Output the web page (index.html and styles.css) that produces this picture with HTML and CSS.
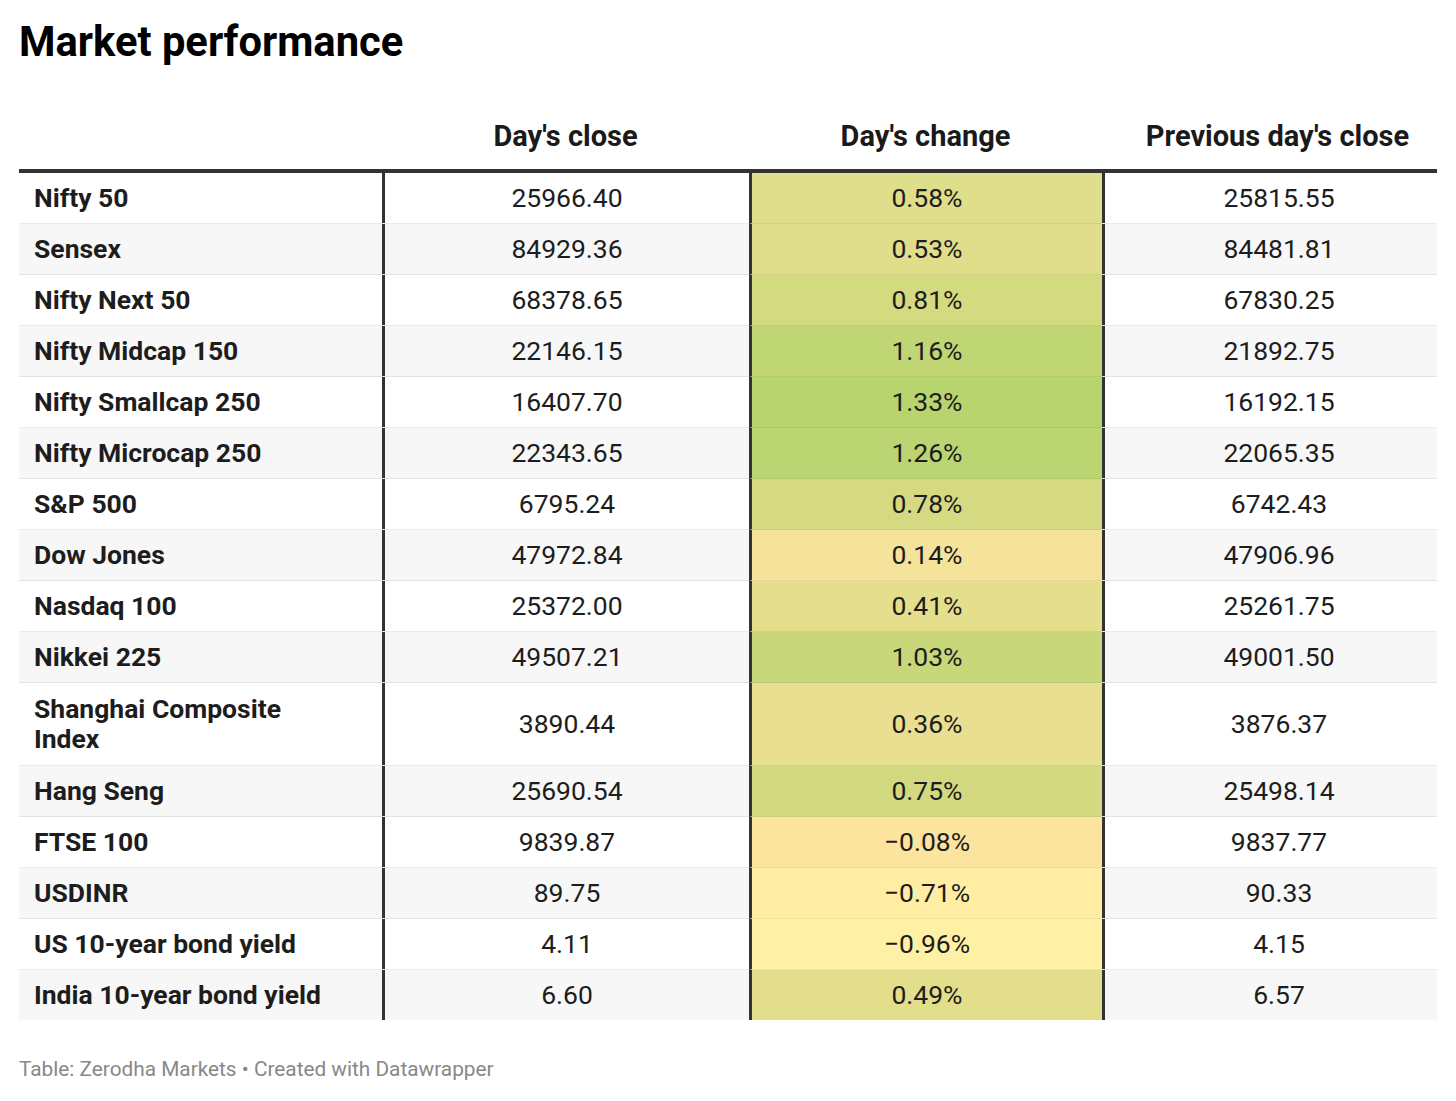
FILE: index.html
```html
<!DOCTYPE html>
<html>
<head>
<meta charset="utf-8">
<link rel="stylesheet" href="styles.css">
</head>
<body>
<div class="chart">
  <h1 class="title">Market performance</h1>
  <div class="table">
    <div class="row head">
      <div class="cell label"></div>
      <div class="cell num">Day's close</div>
      <div class="cell num">Day's change</div>
      <div class="cell num last">Previous day's close</div>
    </div>
    <div class="row"><div class="cell label">Nifty 50</div><div class="cell num">25966.40</div><div class="cell num chg c058">0.58%</div><div class="cell num last">25815.55</div></div>
    <div class="row alt"><div class="cell label">Sensex</div><div class="cell num">84929.36</div><div class="cell num chg c053">0.53%</div><div class="cell num last">84481.81</div></div>
    <div class="row"><div class="cell label">Nifty Next 50</div><div class="cell num">68378.65</div><div class="cell num chg c081">0.81%</div><div class="cell num last">67830.25</div></div>
    <div class="row alt"><div class="cell label">Nifty Midcap 150</div><div class="cell num">22146.15</div><div class="cell num chg c116">1.16%</div><div class="cell num last">21892.75</div></div>
    <div class="row"><div class="cell label">Nifty Smallcap 250</div><div class="cell num">16407.70</div><div class="cell num chg c133">1.33%</div><div class="cell num last">16192.15</div></div>
    <div class="row alt"><div class="cell label">Nifty Microcap 250</div><div class="cell num">22343.65</div><div class="cell num chg c126">1.26%</div><div class="cell num last">22065.35</div></div>
    <div class="row"><div class="cell label">S&amp;P 500</div><div class="cell num">6795.24</div><div class="cell num chg c078">0.78%</div><div class="cell num last">6742.43</div></div>
    <div class="row alt"><div class="cell label">Dow Jones</div><div class="cell num">47972.84</div><div class="cell num chg c014">0.14%</div><div class="cell num last">47906.96</div></div>
    <div class="row"><div class="cell label">Nasdaq 100</div><div class="cell num">25372.00</div><div class="cell num chg c041">0.41%</div><div class="cell num last">25261.75</div></div>
    <div class="row alt"><div class="cell label">Nikkei 225</div><div class="cell num">49507.21</div><div class="cell num chg c103">1.03%</div><div class="cell num last">49001.50</div></div>
    <div class="row tall"><div class="cell label">Shanghai Composite<br>Index</div><div class="cell num">3890.44</div><div class="cell num chg c036">0.36%</div><div class="cell num last">3876.37</div></div>
    <div class="row alt"><div class="cell label">Hang Seng</div><div class="cell num">25690.54</div><div class="cell num chg c075">0.75%</div><div class="cell num last">25498.14</div></div>
    <div class="row"><div class="cell label">FTSE 100</div><div class="cell num">9839.87</div><div class="cell num chg m008">−0.08%</div><div class="cell num last">9837.77</div></div>
    <div class="row alt"><div class="cell label">USDINR</div><div class="cell num">89.75</div><div class="cell num chg m071">−0.71%</div><div class="cell num last">90.33</div></div>
    <div class="row"><div class="cell label">US 10-year bond yield</div><div class="cell num">4.11</div><div class="cell num chg m096">−0.96%</div><div class="cell num last">4.15</div></div>
    <div class="row alt final"><div class="cell label">India 10-year bond yield</div><div class="cell num">6.60</div><div class="cell num chg c049">0.49%</div><div class="cell num last">6.57</div></div>
  </div>
  <div class="footer">Table: Zerodha Markets • Created with Datawrapper</div>
</div>
</body>
</html>
```
FILE: styles.css
```css
html, body {
  margin: 0;
  padding: 0;
  background: #ffffff;
}
body {
  font-family: Roboto, "Liberation Sans", sans-serif;
  color: #1d1d1d;
}
.chart {
  padding: 17px 0 0 19px;
  width: 1418px;
}
.title {
  margin: 0;
  font-size: 41.7px;
  line-height: 50px;
  font-weight: 700;
  color: #000;
}
.table {
  margin-top: 44px;
  display: flex;
  flex-direction: column;
}
.row {
  display: grid;
  grid-template-columns: 363px 367px 353px 335px;
  border-bottom: 1px solid rgba(0, 0, 0, 0.08);
  background: #ffffff;
}
.row.alt {
  background: #f7f7f7;
}
.row.final {
  border-bottom: none;
}
.row.head {
  border-bottom: 4px solid #333333;
  background: #fff;
}
.cell {
  font-size: 26.5px;
  line-height: 30px;
  padding-top: 10px;
  padding-bottom: 10px;
  display: flex;
  align-items: center;
}
.tall .cell {
  padding-top: 11px;
  padding-bottom: 11px;
}
.head .cell {
  font-size: 29px;
  font-weight: 700;
  padding-top: 10px;
  padding-bottom: 18px;
  color: #1a1a1a;
}
.label {
  font-weight: 700;
  padding-left: 15px;
  padding-right: 10px;
}
.num {
  justify-content: center;
  text-align: center;
}
.row:not(.head) .num {
  border-left: 3px solid #333333;
}
.last {
  padding-left: 16px;
}
.chg {
  margin-bottom: -1px;
  border-bottom: 1px solid rgba(0, 0, 0, 0.06);
}
.final .chg {
  margin-bottom: 0;
  border-bottom: none;
}
.c058 { background: #dfde8a; }
.c053 { background: #e0de8b; }
.c081 { background: #d4da80; }
.c116 { background: #c0d674; }
.c133 { background: #b7d46f; }
.c126 { background: #bad571; }
.c078 { background: #d5da82; }
.c014 { background: #f6e39b; }
.c041 { background: #e5de8d; }
.c103 { background: #c7d77a; }
.c036 { background: #e8df90; }
.c075 { background: #d3d980; }
.m008 { background: #fde49e; }
.m071 { background: #feeda2; }
.m096 { background: #fef0a4; }
.c049 { background: #e3de8b; }
.footer {
  margin-top: 37px;
  font-size: 20.8px;
  line-height: 24px;
  color: #888888;
}
```
